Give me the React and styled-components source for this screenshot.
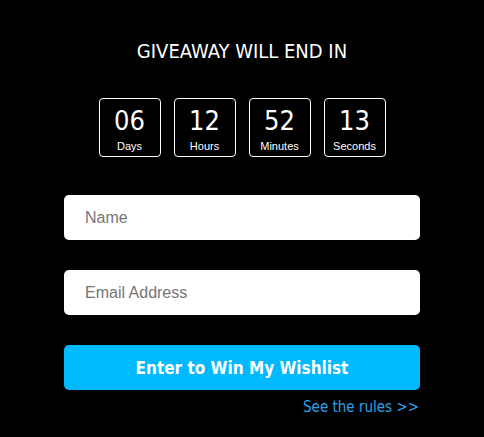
import React from 'react';
import styled, { createGlobalStyle } from 'styled-components';

const GlobalStyle = createGlobalStyle`
  body {
    margin: 0;
    background: #000;
  }
`;

const Page = styled.div`
  min-height: 437px;
  background: #000;
  display: flex;
  justify-content: center;
`;

const Panel = styled.div`
  width: 356px;
  padding-top: 40px;
  display: flex;
  flex-direction: column;
  align-items: center;
`;

const Title = styled.h2`
  margin: 0;
  font-family: 'DejaVu Sans Condensed', 'DejaVu Sans', sans-serif;
  font-weight: normal;
  font-size: 20px;
  line-height: 22px;
  color: #fff;
`;

const Timer = styled.div`
  display: flex;
  gap: 13px;
  margin-top: 36px;
`;

const TimeBox = styled.div`
  width: 60px;
  height: 57px;
  border: 1px solid #fff;
  border-radius: 4px;
  display: flex;
  flex-direction: column;
  align-items: center;
  color: #fff;
`;

const Value = styled.span`
  font-family: 'DejaVu Sans Condensed', 'DejaVu Sans', sans-serif;
  font-size: 27px;
  line-height: 30px;
  margin-top: 7px;
`;

const Unit = styled.span`
  font-family: 'Liberation Sans', Arial, sans-serif;
  font-size: 11px;
  line-height: 13px;
  margin-top: 4px;
`;

const Form = styled.form`
  width: 100%;
  margin-top: 38px;
  display: flex;
  flex-direction: column;
  gap: 30px;
`;

const Field = styled.input`
  box-sizing: border-box;
  width: 100%;
  height: 45px;
  border: none;
  border-radius: 5px;
  background: #fff;
  padding: 0 21px;
  font-family: 'Liberation Sans', Arial, sans-serif;
  font-size: 16px;
  color: #333;
  outline: none;

  &::placeholder {
    color: #757575;
  }
`;

const Submit = styled.button`
  width: 100%;
  height: 45px;
  border: none;
  border-radius: 5px;
  background: #00b9ff;
  color: #fff;
  font-family: 'DejaVu Sans Condensed', 'DejaVu Sans', sans-serif;
  font-weight: bold;
  font-size: 17px;
  cursor: pointer;
`;

const Rules = styled.a`
  align-self: flex-end;
  margin-top: 8px;
  margin-right: 1px;
  font-family: 'DejaVu Sans Condensed', 'DejaVu Sans', sans-serif;
  font-size: 15px;
  color: #2ba3e8;
  text-decoration: none;
`;

const units = [
  { value: '06', label: 'Days' },
  { value: '12', label: 'Hours' },
  { value: '52', label: 'Minutes' },
  { value: '13', label: 'Seconds' },
];

const App = () => {
  return (
    <Page>
      <GlobalStyle />
      <Panel>
        <Title>GIVEAWAY WILL END IN</Title>
        <Timer>
          {units.map((u) => (
            <TimeBox key={u.label}>
              <Value>{u.value}</Value>
              <Unit>{u.label}</Unit>
            </TimeBox>
          ))}
        </Timer>
        <Form onSubmit={(e) => e.preventDefault()}>
          <Field type="text" placeholder="Name" />
          <Field type="email" placeholder="Email Address" />
          <Submit type="submit">Enter to Win My Wishlist</Submit>
        </Form>
        <Rules href="#">See the rules &gt;&gt;</Rules>
      </Panel>
    </Page>
  );
};

export default App;
